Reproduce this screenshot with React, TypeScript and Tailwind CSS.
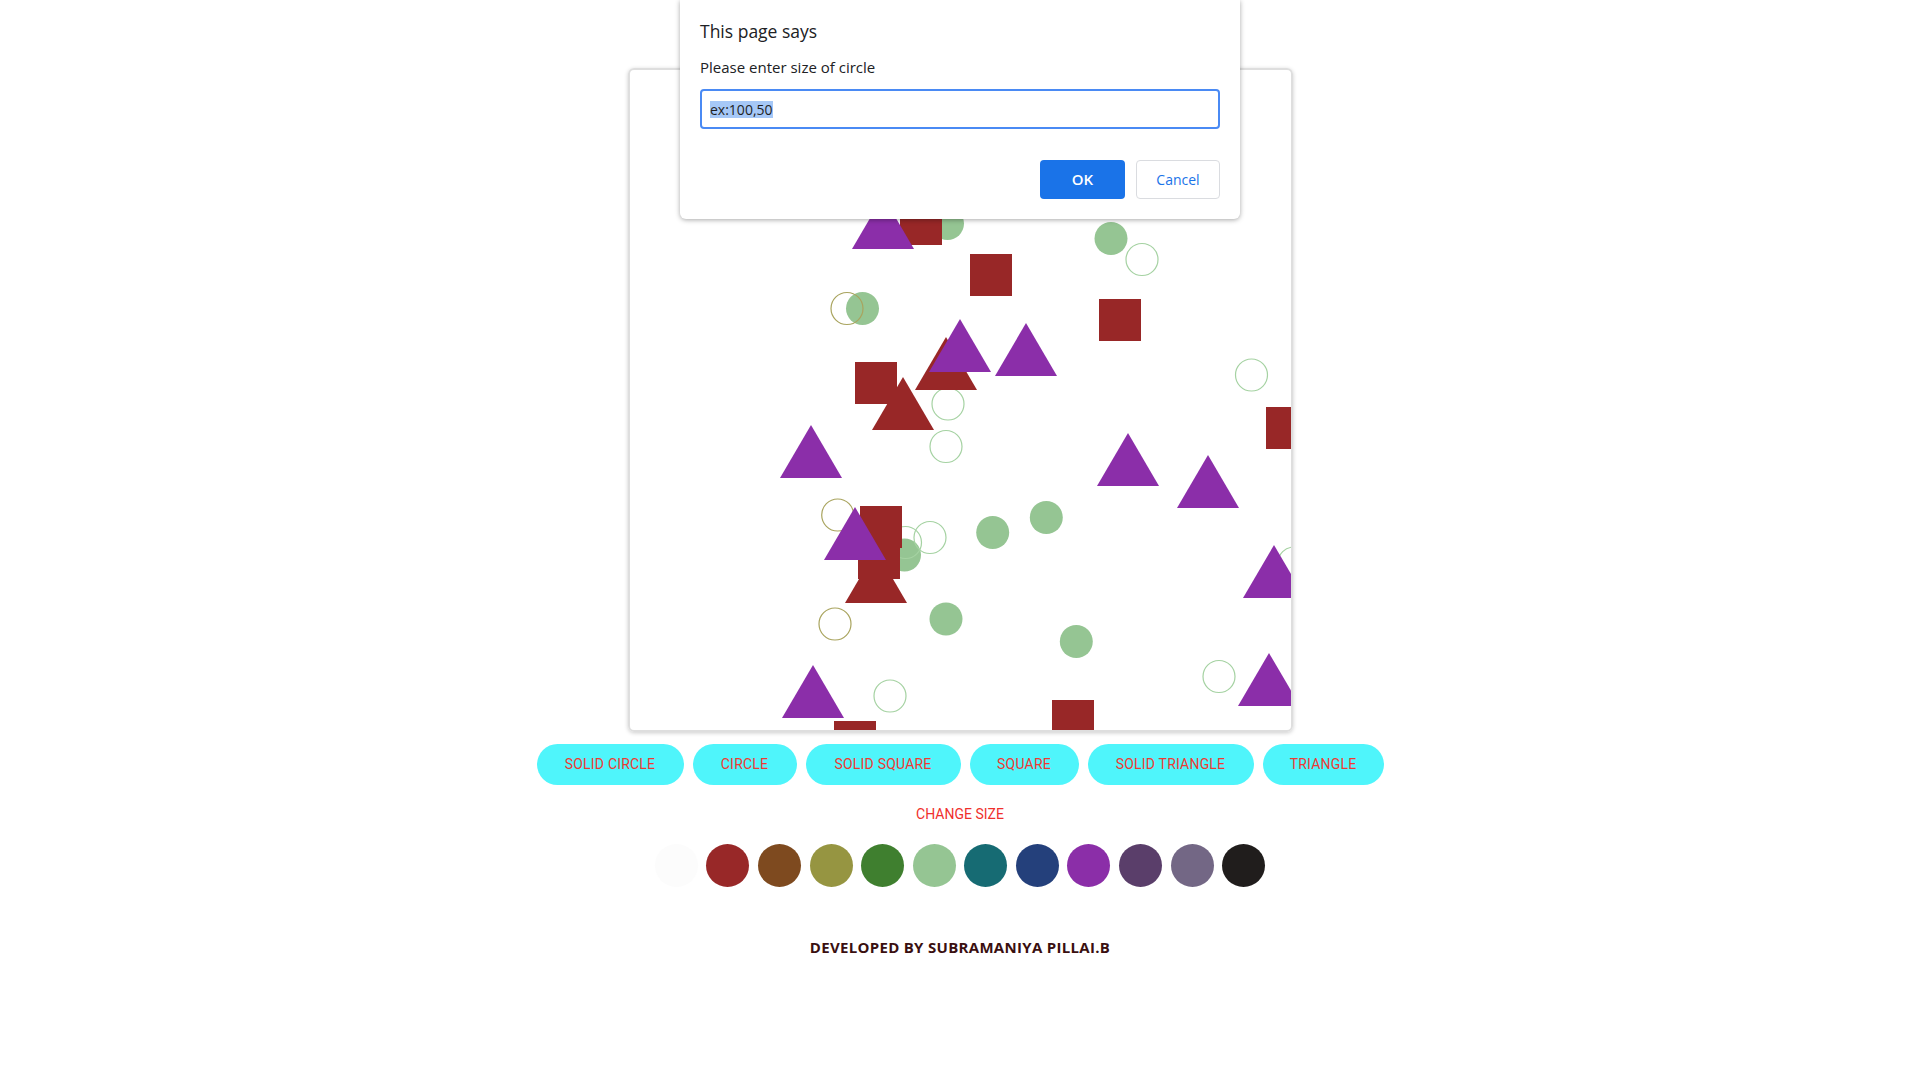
import React from 'react';

// canvas content, coordinates inside the 660x660 drawing area
const solidCircles = [
  [317.5, 153.5], [232.5, 238.5], [481, 168.5], [274.5, 485],
  [316, 549], [362.7, 462.5], [416.3, 447.5], [446.3, 571.5]
];
const greenRings = [
  [318, 334], [316, 376.5], [512, 189.5], [621.5, 305], [275.5, 472.5],
  [300, 467.5], [260, 626], [589, 606.5], [664, 493]
];
const oliveRings = [[217, 238.5], [207.7, 445], [205, 554]];
const squares = [
  [270, 133], [225, 292], [340, 184], [469, 229], [636, 337],
  [230, 436], [228, 467], [204, 651], [422, 630]
];
const redTriangles = [[273, 307], [316, 267], [246, 480]];
const purpleTriangles = [
  [253, 126], [330, 249], [396, 253], [181, 355], [498, 363],
  [578, 385], [225, 437], [183, 595], [644, 475], [639, 583]
];

const tri = (x: number, y: number) => `${x},${y} ${x - 31},${y + 53} ${x + 31},${y + 53}`;

const shapeButtons = [
  { label: 'SOLID CIRCLE', w: 'w-[147px]' },
  { label: 'CIRCLE', w: 'w-[104px]' },
  { label: 'SOLID SQUARE', w: 'w-[155px]' },
  { label: 'SQUARE', w: 'w-[109px]' },
  { label: 'SOLID TRIANGLE', w: 'w-[166px]' },
  { label: 'TRIANGLE', w: 'w-[121px]' }
];

const swatches = [
  'bg-[#fcfcfc]', 'bg-[#982828]', 'bg-[#7e4a1f]', 'bg-[#969541]',
  'bg-[#3f7f2f]', 'bg-[#95c593]', 'bg-[#166b73]', 'bg-[#24407b]',
  'bg-[#8b2ea8]', 'bg-[#5a3e6a]', 'bg-[#736785]', 'bg-[#201d1c]'
];

const App: React.FC = () => {
  return (
    <div className="relative min-h-screen bg-white">
      <div className="flex flex-col items-center pt-[68px]">
        {/* drawing board */}
        <div className="w-[665px] h-[664px] border-2 border-[#dedede] rounded-[6px] overflow-hidden shadow-[0_1px_4px_rgba(0,0,0,0.2)]">
          <svg width="661" height="660" viewBox="0 0 661 660" className="block">
            {solidCircles.map(([x, y], i) => (
              <circle key={`s${i}`} cx={x} cy={y} r="16.5" fill="#95c593" />
            ))}
            {greenRings.map(([x, y], i) => (
              <circle key={`g${i}`} cx={x} cy={y} r="16" fill="none" stroke="#a5d2a2" strokeWidth="1.2" />
            ))}
            {oliveRings.map(([x, y], i) => (
              <circle key={`o${i}`} cx={x} cy={y} r="16" fill="none" stroke="#a9a45e" strokeWidth="1.2" />
            ))}
            {redTriangles.map(([x, y], i) => (
              <polygon key={`r${i}`} points={tri(x, y)} fill="#982727" />
            ))}
            {squares.map(([x, y], i) => (
              <rect key={`q${i}`} x={x} y={y} width="42" height="42" fill="#982727" />
            ))}
            {purpleTriangles.map(([x, y], i) => (
              <polygon key={`p${i}`} points={tri(x, y)} fill="#8b2ea9" />
            ))}
          </svg>
        </div>

        {/* shape buttons */}
        <div className="mt-[12px] flex gap-[9px]">
          {shapeButtons.map((b) => (
            <button
              key={b.label}
              className={`${b.w} h-[41px] rounded-full bg-[#4ff5fb] text-[#ee3a33] text-[14px] tracking-[0.2px] font-['Roboto',sans-serif]`}
            >
              {b.label}
            </button>
          ))}
        </div>

        <div className="mt-[19px] leading-[20px] text-[14px] text-[#f0302c] font-['Roboto',sans-serif]">
          CHANGE SIZE
        </div>

        {/* colour palette */}
        <div className="mt-[20px] flex gap-[8.6px]">
          {swatches.map((c, i) => (
            <div key={i} className={`w-[43px] h-[43px] rounded-full ${c}`} />
          ))}
        </div>

        <div className="mt-[50px] leading-[20px] text-[15px] font-bold tracking-[0.3px] text-[#3a0f10] font-['Open_Sans',sans-serif]">
          DEVELOPED BY SUBRAMANIYA PILLAI.B
        </div>
      </div>

      {/* browser prompt dialog */}
      <div className="absolute top-0 left-1/2 -translate-x-1/2 w-[560px] bg-white rounded-b-[6px] shadow-[0_1px_5px_rgba(0,0,0,0.35)] px-[20px] pt-[19px] pb-[20px] font-['Open_Sans',sans-serif]">
        <div className="text-[17.5px] leading-[24px] text-[#202124]">This page says</div>
        <div className="mt-[14px] text-[15px] leading-[20px] text-[#202124]">Please enter size of circle</div>
        <div className="mt-[12px] h-[40px] border-2 border-[#4a8af4] rounded-[4px] flex items-center px-[8px]">
          <span className="bg-[#a6c8f7] text-[14px] leading-[17px] text-[#1f1f1f]">ex:100,50</span>
        </div>
        <div className="mt-[31px] flex justify-end gap-[11px]">
          <button className="w-[85px] h-[39px] rounded-[4px] bg-[#1a73e8] text-white text-[15px] font-semibold">
            OK
          </button>
          <button className="w-[84px] h-[39px] rounded-[4px] border border-[#dadce0] bg-white text-[#1a73e8] text-[14px] font-medium">
            Cancel
          </button>
        </div>
      </div>
    </div>
  );
};

export default App;
